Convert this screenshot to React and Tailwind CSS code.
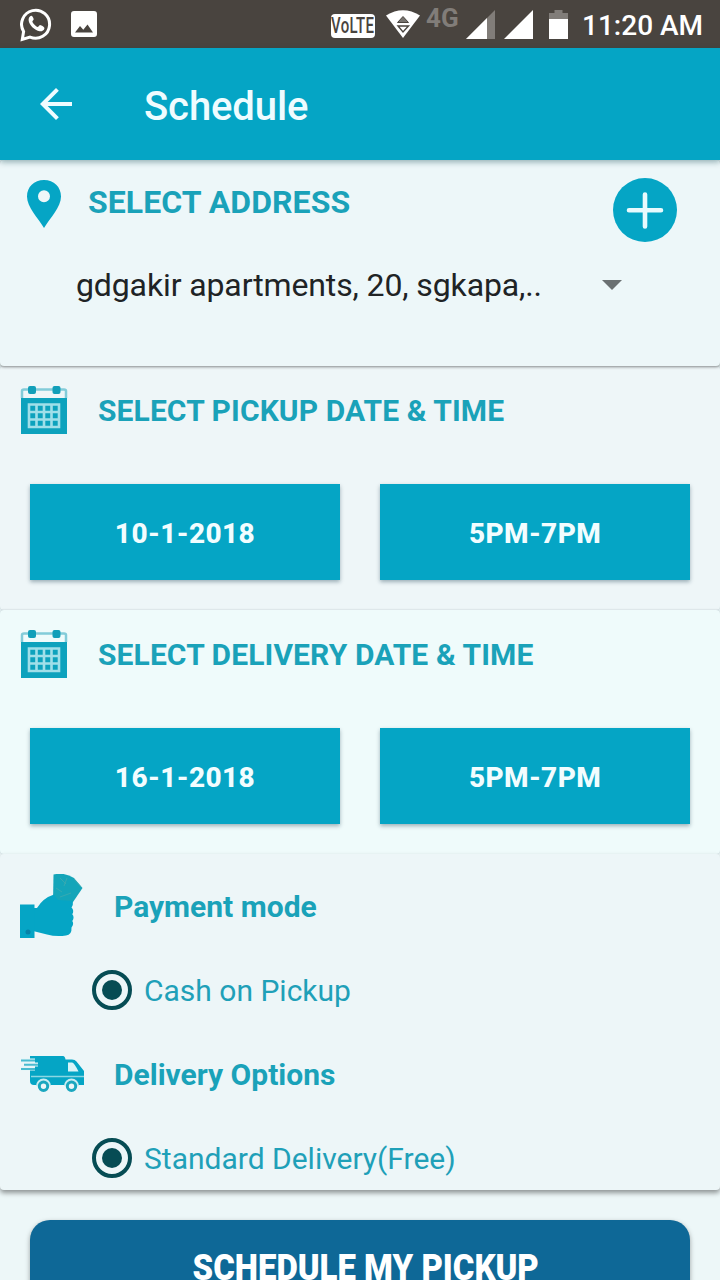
import React, { useState } from "react";
import { MdArrowBack } from "react-icons/md";

const TEAL = "#05a5c5";

export default function App() {
  const [payment, setPayment] = useState("cash");
  const [delivery, setDelivery] = useState("standard");
  return (
    <div className="flex flex-col w-[720px] h-[1280px] overflow-hidden bg-[#edf7f8] font-['Roboto',sans-serif]">
      <StatusBar />
      <header className="z-20 flex items-center h-28 shrink-0 pl-8 bg-[#05a5c5] shadow-[0_2px_6px_rgba(0,60,70,0.4)]">
        <button aria-label="Back">
          <MdArrowBack size={48} color="#effcff" />
        </button>
        <h1 className="pl-16 pt-1.5 text-[40px] leading-none font-medium tracking-[-0.1px] text-[#effcff]">
          Schedule
        </h1>
      </header>

      <section className="z-10 h-[206px] shrink-0 rounded bg-[#edf7f9] shadow-[0_1px_3px_rgba(0,0,0,0.45)]">
        <div className="flex pl-5 pr-[43px] pt-[18px]">
          <PinIcon />
          <h2 className="flex-1 pl-5 pt-2 text-[32px] leading-8 font-bold tracking-[0.05px] text-[#1aa2b9]">
            SELECT ADDRESS
          </h2>
          <button aria-label="Add address">
            <AddIcon />
          </button>
        </div>
        <div className="flex items-center justify-between pl-[76px] pr-[98px] pt-[23px]">
          <span className="text-[32px] leading-10 tracking-[-0.12px] text-[#202325]">
            gdgakir apartments, 20, sgkapa,..
          </span>
          <svg width="20" height="10" viewBox="0 0 20 10">
            <path d="M0 0h20L10 10z" fill="#6a7072" />
          </svg>
        </div>
      </section>

      <DateSection
        title="SELECT PICKUP DATE & TIME"
        date="10-1-2018"
        time="5PM-7PM"
        className="bg-[#eef6f8]"
      />
      <DateSection
        title="SELECT DELIVERY DATE & TIME"
        date="16-1-2018"
        time="5PM-7PM"
        className="bg-[#effbfb]"
      />

      <section className="h-[336px] shrink-0 rounded bg-[#edf6f8] pt-5 shadow-[0_3px_5px_rgba(0,0,0,0.4)]">
        <OptionTitle icon={<CashIcon />} title="Payment mode" />
        <RadioOption
          label="Cash on Pickup"
          checked={payment === "cash"}
          onSelect={() => setPayment("cash")}
        />
        <OptionTitle icon={<TruckIcon />} title="Delivery Options" />
        <RadioOption
          label="Standard Delivery(Free)"
          checked={delivery === "standard"}
          onSelect={() => setDelivery("standard")}
        />
      </section>

      <button className="mx-[30px] mt-[30px] h-24 shrink-0 rounded-[20px] bg-[#0e6897] shadow-[0_2px_5px_rgba(0,0,0,0.35)]">
        <span className="inline-block pl-3 scale-x-[0.915] whitespace-nowrap text-[36px] leading-9 font-black text-white">
          SCHEDULE MY PICKUP
        </span>
      </button>
    </div>
  );
}

function DateSection({ title, date, time, className }) {
  return (
    <section
      className={`h-[244px] shrink-0 rounded pt-5 shadow-[0_0_2px_rgba(0,40,50,0.25)] ${className}`}>
      <div className="flex pl-5">
        <CalendarIcon />
        <h2 className="pl-[30px] pt-[9px] text-[30px] leading-8 font-bold tracking-[0.1px] text-[#1aa2b9]">
          {title}
        </h2>
      </div>
      <div className="flex gap-10 px-[30px] pt-[50px]">
        <SlotButton>{date}</SlotButton>
        <SlotButton>{time}</SlotButton>
      </div>
    </section>
  );
}

function SlotButton({ children }) {
  return (
    <button className="flex-1 h-24 pt-1 bg-[#05a5c5] text-[28px] font-extrabold tracking-[0.4px] text-[#f2fdff] shadow-[0_2px_4px_rgba(0,40,60,0.35)]">
      {children}
    </button>
  );
}

function OptionTitle({ icon, title }) {
  return (
    <div className="flex items-center h-16 pl-5">
      {icon}
      <h3 className="pl-[30px] pt-0.5 text-[30px] leading-8 font-bold text-[#1aa2b9]">
        {title}
      </h3>
    </div>
  );
}

function RadioOption({ label, checked, onSelect }) {
  return (
    <button className="flex items-center h-[104px] pl-[92px]" onClick={onSelect}>
      <svg width="40" height="40" viewBox="0 0 40 40">
        <circle cx="20" cy="20" r="18" fill="none" stroke="#064c54" strokeWidth="4" />
        {checked && <circle cx="20" cy="20" r="10" fill="#064c54" />}
      </svg>
      <span className="pl-3 pt-0.5 text-[30px] leading-8 text-[#1fa0b8]">{label}</span>
    </button>
  );
}

function StatusBar() {
  return (
    <div className="flex items-center h-12 shrink-0 pl-5 bg-[#49443f]">
      <svg width="33" height="35" viewBox="0 0 33 35" fill="none">
        <path
          d="M3.6 24.5A14 14 0 1 1 10 30.1L2.3 32.4z"
          stroke="#fff"
          strokeWidth="3"
        />
        <path
          d="M11.3 8.7c-1.6.5-2.9 2.3-2.7 4.4.4 5 5.9 10.4 11 11.2 2.2.3 4.5-1 4.8-2.9.2-1.3-2.9-3.1-4.3-3.3-.8 0-1.5 1.9-2.3 1.8-2-.5-4.800-3.400-5.400-5.200-.2-.8 1.400-1.600 1.300-2.400-.2-1.100-1.200-3.900-2.400-3.600z"
          fill="#fff"
        />
      </svg>
      <svg className="ml-[18px]" width="26" height="26" viewBox="0 0 26 26">
        <path
          fillRule="evenodd"
          d="M3 0h20a3 3 0 0 1 3 3v20a3 3 0 0 1-3 3H3a3 3 0 0 1-3-3V3a3 3 0 0 1 3-3zM4 21.5h18L16.5 13.5 12.3 18.8 9 15z"
          fill="#fff"
        />
      </svg>
      <div className="flex items-center justify-center w-11 h-6 mt-1 ml-[234px] rounded bg-white">
        <span className="scale-x-[0.68] text-[22px] leading-6 font-medium tracking-[0.4px] text-[#49443f]">
          VoLTE
        </span>
      </div>
      <svg className="ml-[11px]" width="34" height="28" viewBox="0 0 34 28">
        <path d="M0 5.5Q17-5 34 5.5L17 28z" fill="#fff" />
        <path d="M11.5 12.5L17 6.5l5.5 6z" fill="#77736f" stroke="#49443f" />
        <path d="M12 16h10.500L17 22z" fill="#fff" stroke="#49443f" strokeWidth="1.4" />
      </svg>
      <span className="ml-1.5 mb-3 w-[34px] text-[26px] leading-6 font-bold text-[#817d79]">
        4G
      </span>
      <svg className="ml-[6px]" width="29" height="29" viewBox="0 0 29 29">
        <path d="M0 29L29 0v29z" fill="#817d79" />
        <path d="M0 29L21 8v21z" fill="#fff" />
      </svg>
      <svg className="ml-[9px]" width="29" height="29" viewBox="0 0 29 29">
        <path d="M0 29L29 0v29z" fill="#fff" />
      </svg>
      <svg className="ml-4" width="19" height="29" viewBox="0 0 19 29">
        <path d="M5.5 0h8v3H19v7H0V3h5.500z" fill="#817d79" />
        <path d="M0 9h19v20H0z" fill="#fff" />
      </svg>
      <span className="ml-[14px] mt-[3px] whitespace-nowrap text-[28px] leading-8 font-medium text-white">
        11:20 AM
      </span>
    </div>
  );
}

function PinIcon() {
  return (
    <svg className="mt-0.5" width="48" height="48" viewBox="0 0 48 48">
      <path
        fillRule="evenodd"
        d="M24 0C14 0 7 7 7 16.5 7 27 18 38 24 48c6-10 17-21 17-31.5C41 7 34 0 24 0zm0 10.2a6 6 0 1 1 0 12 6 6 0 0 1 0-12z"
        fill={TEAL}
      />
    </svg>
  );
}

function AddIcon() {
  return (
    <svg width="64" height="64" viewBox="0 0 64 64">
      <circle cx="32" cy="32" r="32" fill={TEAL} />
      <path d="M32 16.5v32M16 32.200h32" stroke="#e8fafd" strokeWidth="4.6" strokeLinecap="round" />
    </svg>
  );
}

function CalendarIcon() {
  return (
    <svg width="48" height="48" viewBox="0 0 48 48">
      <path d="M2 12V5q0-1.500 2-1.500h40Q46 3.500 46 5v7" fill="none" stroke="#83ccd9" strokeWidth="2.5" />
      <path d="M1 12h46v36H1z" fill="#0da2bd" />
      <rect x="8" y="0" width="8" height="8" rx="2" fill="#129fb9" />
      <rect x="32.5" y="0" width="8" height="8" rx="2" fill="#129fb9" />
      <path
        d="M9 18.5h30V41H9zM9 26h30M9 33.500h30M16.500 18.500V41M24 18.500V41M31.500 18.500V41"
        fill="none"
        stroke="#a0dfe9"
        strokeWidth="2.6"
      />
    </svg>
  );
}

function CashIcon() {
  return (
    <svg width="64" height="64" viewBox="0 0 64 64">
      {/* notes */}
      <path d="M33.5 .5Q45-2 54 4L62.500 14 51 31 33 28z" fill="#14a5b9" />
      <path
        d="M40 4l6 6M47 4l-3 8M36 14l6 4M40 23l11-4M54 5l7 8"
        fill="none"
        stroke="#3fa9ae"
        strokeWidth="0.8"
      />
      {/* hand and cuff */}
      <path
        d="M13 34H17Q23 24 34 20.500L38 26l14 1q2 3-.5 6.500 3 3 .8 6.800 2.500 3 0 6.800 2 3-.8 6.400Q52 61 46 61.500q-10 1.500-19-1L13 57z"
        fill={TEAL}
      />
      <path d="M0 30.500h14.500V64H0z" fill={TEAL} />
      <circle cx="8" cy="58" r="2.5" fill="#0782a8" />
    </svg>
  );
}

function TruckIcon() {
  return (
    <svg width="64" height="64" viewBox="0 0 64 64">
      <path
        d="M12 14h31q2 0 2.500 3.500H52q3 0 4.500 2L64 29v14H14q-4 0-4-4V14z"
        fill={TEAL}
      />
      <path d="M1 18.500h14M4 22.500h14M1 26.500h14" stroke="#e4f5f8" strokeWidth="4" />
      <path d="M1 18.500h14M4 22.700h14M1 27h14" stroke="#49bbd0" strokeWidth="2" />
      <path d="M48 20.500h4q2 0 6.500 9H48z" fill="#d9f4f8" />
      <path d="M11 34.500h53" stroke="#8bd7e3" strokeWidth="1.6" />
      <circle cx="23.500" cy="44" r="7.500" fill="#c9ecf1" />
      <circle cx="51.500" cy="44" r="7.500" fill="#c9ecf1" />
      <path d="M14 44h50v9H14z" fill="#edf6f8" />
      <circle cx="23.500" cy="44.300" r="4.200" fill="#edf6f8" stroke="#1ba7bf" strokeWidth="3" />
      <circle cx="51.500" cy="44.300" r="4.200" fill="#edf6f8" stroke="#1ba7bf" strokeWidth="3" />
    </svg>
  );
}
